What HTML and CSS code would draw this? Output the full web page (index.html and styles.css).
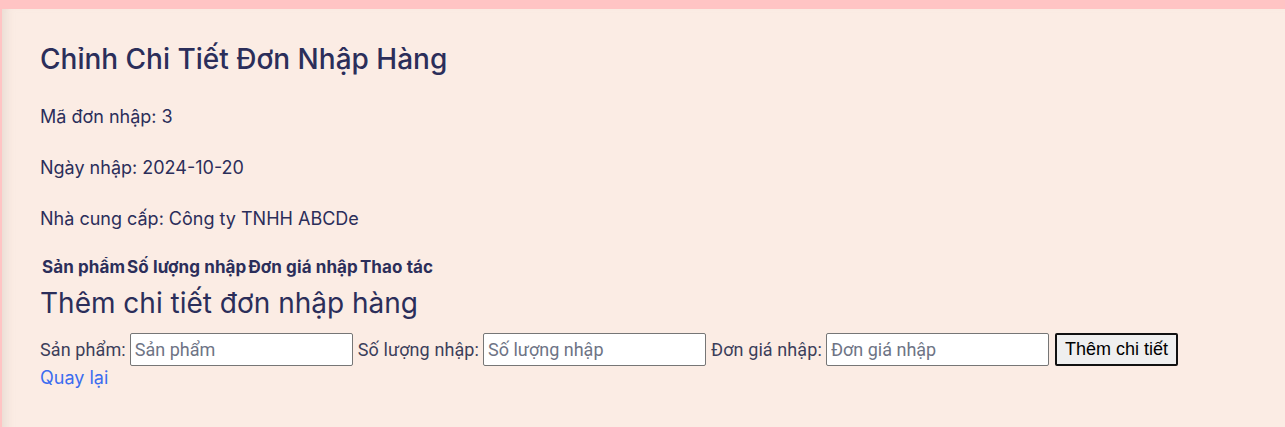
FILE: index.html
```html
<!DOCTYPE html>
<html lang="vi">
<head>
<meta charset="utf-8">
<title>Chỉnh Chi Tiết Đơn Nhập Hàng</title>
<link rel="stylesheet" href="styles.css">
</head>
<body>
<main class="content">
  <h1 class="title">Chỉnh Chi Tiết Đơn Nhập Hàng</h1>
  <p class="info">Mã đơn nhập: 3</p>
  <p class="info">Ngày nhập: 2024-10-20</p>
  <p class="info">Nhà cung cấp: Công ty TNHH ABCDe</p>
  <table class="detail-table">
    <thead>
      <tr><th>Sản phẩm</th><th>Số lượng nhập</th><th>Đơn giá nhập</th><th>Thao tác</th></tr>
    </thead>
  </table>
  <h2 class="subtitle">Thêm chi tiết đơn nhập hàng</h2>
  <form class="add-form">
    <label class="field-label" for="sp">Sản phẩm:</label>
    <input class="field-input" id="sp" type="text" placeholder="Sản phẩm">
    <label class="field-label" for="sl">Số lượng nhập:</label>
    <input class="field-input" id="sl" type="text" placeholder="Số lượng nhập">
    <label class="field-label" for="dg">Đơn giá nhập:</label>
    <input class="field-input" id="dg" type="text" placeholder="Đơn giá nhập">
    <button class="submit-btn" type="submit">Thêm chi tiết</button>
  </form>
  <a class="back-link" href="#">Quay lại</a>
</main>
</body>
</html>
```

FILE: styles.css
```css
html, body {
  margin: 0;
  height: 100%;
}
body {
  background: #ffc4c4;
  font-family: "Inter", "Noto Sans", sans-serif;
  color: #2b2e5a;
  overflow: hidden;
}
.content {
  margin: 9px 0 0 2px;
  min-height: 100%;
  background: #fbece4;
  box-shadow: inset 10px 0 8px -6px rgba(200, 190, 180, 0.35);
  padding: 28px 38px 0;
  box-sizing: border-box;
}
.title {
  font-size: 28px;
  font-weight: 500;
  margin: 0 0 22px;
  line-height: 44px;
}
.info {
  font-size: 18px;
  margin: 0 0 24px;
  line-height: 27px;
}
.detail-table {
  font-size: 17px;
  margin-top: -2px;
  letter-spacing: 0.1px;
}
.detail-table th {
  padding: 1px 0;
  font-weight: 700;
}
.subtitle {
  font-size: 28px;
  font-weight: 400;
  margin: 3px 0 10px;
  line-height: 40px;
}
.add-form {
  display: flex;
  align-items: center;
  gap: 4px;
  font-family: "Liberation Sans Narrow", "Roboto", sans-serif;
  font-size: 18px;
  color: #3b3e5a;
}
.field-label {
  letter-spacing: 0.1px;
}
.field-label + .field-input {
  margin-left: 0;
}
.field-input {
  width: 223px;
  height: 33px;
  box-sizing: border-box;
  border: 1px solid #767676;
  border-radius: 2px;
  font-family: inherit;
  font-size: 18px;
  padding: 1px 4px;
  background: #fff;
  margin-right: 1px;
}
.field-input::placeholder {
  color: #6e7485;
}
.submit-btn {
  height: 33px;
  margin-left: 1px;
  padding: 0 8px;
  font-family: "Liberation Sans", Arial, sans-serif;
  font-size: 18px;
  color: #000;
  background: #efefef;
  border: 2px solid #111;
  border-radius: 2px;
}
.back-link {
  display: inline-block;
  margin-top: 1px;
  font-size: 18px;
  color: #3b6cf0;
  text-decoration: none;
}
```
